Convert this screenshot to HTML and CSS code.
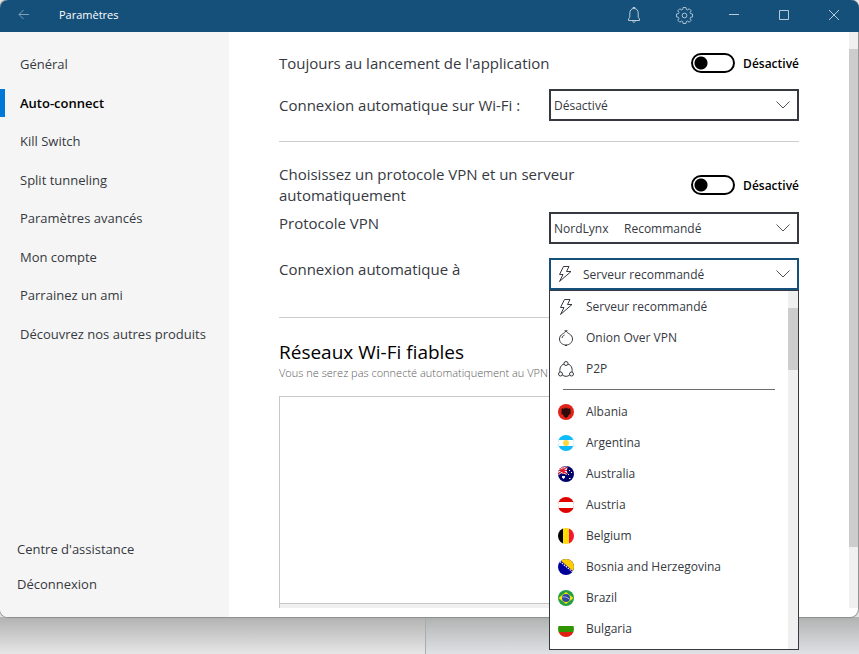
FILE: index.html
```html
<!DOCTYPE html>
<html lang="fr">
<head>
    <meta charset="UTF-8">
    <meta name="viewport" content="width=device-width, initial-scale=1.0">
    <title>Paramètres</title>
    <link rel="stylesheet" href="styles.css">
</head>
<body>
    <div class="window">
        <header class="titlebar">
            <button class="back" aria-label="Retour">
                <svg width="12" height="12" viewBox="0 0 12 12"><path d="M11 5.500H1M5.500 1L1 5.500 5.500 10"/></svg>
            </button>
            <h1>Paramètres</h1>
            <button aria-label="Notifications">
                <svg width="14" height="18" viewBox="0 0 14 18"><path d="M6 2.500V1.500h2v1M1.500 14.500h11v-1.500l-1.300-1.800V7C11.200 4.300 9.500 2.500 7 2.500S2.800 4.300 2.800 7v4.200L1.500 13zM5.500 14.500c0 2.300 3 2.300 3 0"/></svg>
            </button>
            <button aria-label="Réglages">
                <svg width="17" height="17" viewBox="0 0 18 18"><path d="M7.500 1.500h3l.4 2 1.300.6 1.800-1.200 2.100 2.100-1.200 1.800.6 1.300 2 .4v3l-2 .4-.6 1.300 1.200 1.800-2.100 2.100-1.800-1.200-1.300.6-.4 2h-3l-.4-2-1.300-.6L4 17.100 1.900 15l1.200-1.800-.6-1.300-2-.4v-3l2-.4.6-1.300L1.900 5 4 2.900l1.800 1.200 1.300-.6z" transform="translate(0 -1)"/><circle cx="9" cy="9" r="2.500"/></svg>
            </button>
            <button aria-label="Réduire">
                <svg width="10" height="10" viewBox="0 0 10 10"><path d="M0 4.500h10"/></svg>
            </button>
            <button aria-label="Agrandir">
                <svg width="10" height="10" viewBox="0 0 10 10"><path d="M.5.5h9v9h-9z"/></svg>
            </button>
            <button aria-label="Fermer">
                <svg width="10" height="10" viewBox="0 0 10 10"><path d="M0 0l10 10M10 0L0 10"/></svg>
            </button>
        </header>

        <div class="body">
            <aside class="sidebar">
                <nav class="menu">
                    <a href="#general">Général</a>
                    <a href="#auto-connect" class="active">Auto-connect</a>
                    <a href="#kill-switch">Kill Switch</a>
                    <a href="#split-tunneling">Split tunneling</a>
                    <a href="#avances">Paramètres avancés</a>
                    <a href="#compte">Mon compte</a>
                    <a href="#parrainage">Parrainez un ami</a>
                    <a href="#produits">Découvrez nos autres produits</a>
                </nav>
                <div class="links">
                    <a href="#aide">Centre d'assistance</a>
                    <a href="#deconnexion">Déconnexion</a>
                </div>
            </aside>

            <main class="content">
                <div class="row">
                    <label class="name" for="launch">Toujours au lancement de l'application</label>
                    <input type="checkbox" id="launch" class="toggle">
                    <span class="state">Désactivé</span>
                </div>
                <div class="row wifi">
                    <label class="name" for="wifi">Connexion automatique sur Wi-Fi :</label>
                    <select id="wifi" class="box">
                        <option>Désactivé</option>
                        <option>Activé</option>
                    </select>
                </div>
                <hr>
                <div class="row auto">
                    <label class="name" for="auto">Choisissez un protocole VPN et un serveur automatiquement</label>
                    <input type="checkbox" id="auto" class="toggle">
                    <span class="state">Désactivé</span>
                </div>
                <div class="row top protocol">
                    <label class="name" for="protocol">Protocole VPN</label>
                    <select id="protocol" class="box">
                        <option>NordLynx&nbsp;&nbsp;&nbsp;&nbsp;&nbsp;Recommandé</option>
                        <option>OpenVPN (UDP)</option>
                        <option>OpenVPN (TCP)</option>
                    </select>
                </div>
                <div class="row top server">
                    <label class="name" for="server">Connexion automatique à</label>
                    <div class="dropdown">
                        <button id="server" class="box open" aria-haspopup="listbox" aria-expanded="true">
                            <svg class="icon" width="16" height="18" viewBox="0 0 16 18"><path d="M6.500 1.500H12L9.500 6.500H14L2.500 16.500l3.500-7H2.500z"/></svg>
                            Serveur recommandé
                        </button>
                        <div class="list">
                            <ul role="listbox" aria-label="Connexion automatique à">
                                <li role="option" aria-selected="true">
                                    <svg class="icon" width="16" height="18" viewBox="0 0 16 18"><path d="M6.500 1.500H12L9.500 6.500H14L2.500 16.500l3.500-7H2.500z"/></svg>
                                    Serveur recommandé
                                </li>
                                <li role="option">
                                    <svg class="icon" width="16" height="16" viewBox="0 0 16 16"><path d="M6.500.8h3M8 1C7 3.500 1.500 4 1.500 9c0 3.500 3 6 6.500 6s6.500-2.500 6.500-6C14.500 4 9 3.500 8 1zM7 15.500h2M4 8c.3-1.500 1.200-2.400 2.500-3"/></svg>
                                    Onion Over VPN
                                </li>
                                <li role="option">
                                    <svg class="icon" width="16" height="16" viewBox="0 0 16 16"><circle cx="8" cy="2.500" r="2"/><circle cx="2.500" cy="13" r="2"/><circle cx="13.500" cy="13" r="2"/><path d="M6 3C3 4 1.300 7 2 11M10 3c3 1 4.700 4 4 8M4.300 14c2.200 1.800 5.200 1.800 7.400 0"/></svg>
                                    P2P
                                </li>
                                <li class="line" role="separator"></li>
                                <li role="option">
                                    <svg class="flag" viewBox="0 0 16 16"><path fill="#e2231a" d="M0 0h16v16H0z"/><path fill="#2a0d0b" d="M4 4l2 1 1-1.500 1 1 1-1L10 5l2-1v1l1 1-1 1 1 1-1 1 1 1-2 .5-1 2-2 1.500-2-1.500-1-2L3 10l1-1-1-1 1-1-1-1 1-1z"/></svg>
                                    Albania
                                </li>
                                <li role="option">
                                    <svg class="flag" viewBox="0 0 16 16"><path fill="#0fbcf9" d="M0 0h16v16H0z"/><path fill="#fff" d="M0 5h16v6H0z"/><circle cx="8" cy="8" r="3" fill="#ffd93b"/></svg>
                                    Argentina
                                </li>
                                <li role="option">
                                    <svg class="flag" viewBox="0 0 16 16"><path fill="#00006b" d="M0 0h16v16H0z"/><path stroke="#fff" stroke-width="2.500" d="M0 1l9 7M0 8l9-7M5 0v8M0 4.500h9"/><path stroke="#e0162b" stroke-width="1.200" d="M0 1l9 7M0 8l9-7M5 0v8M0 4.500h9"/><path fill="#fff" d="M4 10h3v1.500L5.500 13 4 11.500zM11 4h1v1h-1zM13 6h1v1h-1zM10 8h1v1h-1zM11 12h1.500v1H11z"/></svg>
                                    Australia
                                </li>
                                <li role="option">
                                    <svg class="flag" viewBox="0 0 16 16"><path fill="#e00000" d="M0 0h16v16H0z"/><path fill="#fff" d="M0 5h16v6H0z"/></svg>
                                    Austria
                                </li>
                                <li role="option">
                                    <svg class="flag" viewBox="0 0 16 16"><path fill="#000" d="M0 0h5v16H0z"/><path fill="#ffd90c" d="M5 0h6v16H5z"/><path fill="#f31830" d="M11 0h5v16h-5z"/></svg>
                                    Belgium
                                </li>
                                <li role="option">
                                    <svg class="flag" viewBox="0 0 16 16"><path fill="#000099" d="M0 0h16v16H0z"/><path fill="#fc0" d="M1 0h15v13z"/><path stroke="#fff" stroke-width="1.200" stroke-dasharray="1.500 1" d="M0 1l16 13"/></svg>
                                    Bosnia and Herzegovina
                                </li>
                                <li role="option">
                                    <svg class="flag" viewBox="0 0 16 16"><path fill="#229e45" d="M0 0h16v16H0z"/><path fill="#f8e509" d="M8 2l7.500 6L8 14 .5 8z"/><circle cx="8" cy="8" r="4" fill="#2b49a3"/><path fill="none" stroke="#a9b8e0" d="M4.500 7c2.500-.5 5 .3 7 2.200"/></svg>
                                    Brazil
                                </li>
                                <li role="option">
                                    <svg class="flag" viewBox="0 0 16 16"><path fill="#fff" d="M0 0h16v5H0z"/><path fill="#319400" d="M0 5h16v6H0z"/><path fill="#de2110" d="M0 11h16v5H0z"/></svg>
                                    Bulgaria
                                </li>
                            </ul>
                            <div class="scroll"><div class="thumb"></div></div>
                        </div>
                    </div>
                </div>
                <hr class="second">
                <h2>Réseaux Wi-Fi fiables</h2>
                <p class="hint">Vous ne serez pas connecté automatiquement au VPN</p>
                <div class="networks"></div>
            </main>
            <div class="scroll page"><div class="thumb"></div></div>
        </div>
    </div>
    <div class="backdrop">
        <div class="left"></div>
        <div class="right"></div>
    </div>
</body>
</html>
```
FILE: styles.css
```css
* {
    box-sizing: border-box;
}
body {
    display: flex;
    flex-direction: column;
    min-height: 100vh;
    margin: 0;
    font-family: "Segoe UI", "Open Sans", sans-serif;
    font-size: 13px;
    color: #36393f;
    background: #e4e5e6;
}
button, select {
    margin: 0;
    font: inherit;
    color: inherit;
}
a {
    color: inherit;
    text-decoration: none;
}
svg {
    display: block;
    flex: none;
}
.window {
    position: relative;
    z-index: 1;
    display: flex;
    flex-direction: column;
    flex: 1;
    margin-right: 1px;
    border-radius: 8px;
    background: white;
    box-shadow: 0 0 1px 1px #8c8c8c;
}

/* title bar */
.titlebar {
    display: flex;
    height: 32px;
    margin-right: -1px;
    border-radius: 8px 8px 0 0;
    background: #15507a;
    color: white;
}
.titlebar h1 {
    flex: 1;
    margin: 0;
    padding-left: 11px;
    font-size: 11px;
    font-weight: normal;
    line-height: 30px;
}
.titlebar button {
    display: flex;
    align-items: center;
    justify-content: center;
    width: 50px;
    height: 30px;
    padding: 0;
    border: none;
    background: none;
}
.titlebar .back {
    width: 48px;
}
.titlebar svg {
    fill: none;
    stroke: #b9cbd8;
}
.titlebar .back svg {
    stroke: #7f9fb6;
}

/* sidebar */
.body {
    display: flex;
    flex: 1;
}
.sidebar {
    display: flex;
    flex-direction: column;
    justify-content: space-between;
    width: 229px;
    padding: 13px 0 15px;
    border-radius: 0 0 0 8px;
    background: #f5f5f5;
}
.menu {
    display: grid;
    grid-auto-rows: 1fr;
    height: 308px;
}
.menu a {
    display: flex;
    align-items: center;
    padding-left: 20px;
}
.menu .active {
    position: relative;
    font-weight: 600;
    color: black;
}
.menu .active::before {
    content: "";
    position: absolute;
    left: 0;
    width: 5px;
    height: 28px;
    background: #0078d7;
}
.links a {
    display: block;
    padding-left: 17px;
    line-height: 35px;
}

/* settings */
.content {
    display: flex;
    flex-direction: column;
    flex: 1;
    padding: 15px 50px 9px;
}
.row {
    display: flex;
    align-items: center;
    min-height: 32px;
}
.row.top {
    align-items: flex-start;
}
.name {
    flex: 1;
    padding-right: 60px;
    font-size: 15px;
    line-height: 21px;
}
.wifi {
    margin-top: 10px;
}
.wifi .name, .top .name {
    padding: 1px 0 0;
}
.auto {
    margin-top: 22px;
}
.protocol {
    margin-top: 6px;
}
.server {
    margin-top: 14px;
}
hr {
    width: 100%;
    height: 1px;
    margin: 20px 0 0;
    border: none;
    background: #cccccc;
}
hr.second {
    margin-top: 27px;
}
.toggle {
    appearance: none;
    width: 44px;
    height: 20px;
    margin: 0;
    border: 2px solid black;
    border-radius: 10px;
    background: radial-gradient(circle at 8px 8px, black 6px, transparent 7px);
}
.state {
    padding-left: 8px;
    font-size: 12px;
    font-weight: 600;
    color: black;
}
.box {
    appearance: none;
    width: 250px;
    height: 32px;
    padding: 0 3px;
    border: 2px solid #36393f;
    border-radius: 0;
    font-size: 12px;
    background: white url("data:image/svg+xml,%3Csvg xmlns='http://www.w3.org/2000/svg' width='14' height='8' fill='none' stroke='%2350535a'%3E%3Cpath d='M.5.5L7 7 13.500.5'/%3E%3C/svg%3E") no-repeat right 7px center;
}
.box.open {
    display: flex;
    align-items: center;
    gap: 10px;
    padding-left: 6px;
    border-color: #15507a;
}

/* server list */
.dropdown {
    position: relative;
}
.list {
    position: absolute;
    top: 32px;
    left: 0;
    z-index: 2;
    display: flex;
    width: 100%;
    border: 1px solid #36393f;
    background: white;
}
.list ul {
    flex: 1;
    margin: 0;
    padding: 0 0 5px;
    list-style: none;
    font-size: 12px;
}
.list li {
    display: flex;
    align-items: center;
    gap: 12px;
    height: 31px;
    padding-left: 8px;
}
.list .line {
    height: 1px;
    margin: 5px 13px 6px;
    background: #6e6e6e;
}
.icon {
    fill: none;
    stroke: #36393f;
}
.flag {
    width: 16px;
    height: 16px;
    border-radius: 50%;
}
.scroll {
    width: 10px;
    padding-top: 17px;
    background: #f0f0f0;
}
.thumb {
    height: 62px;
    background: #cdcdcd;
}
.page {
    width: 9px;
    margin-bottom: 9px;
}
.page .thumb {
    height: 89%;
}

/* trusted networks */
h2 {
    margin: 20px 0 0;
    font-size: 19px;
    font-weight: normal;
    line-height: 28px;
    color: black;
}
.hint {
    margin: 0;
    font-size: 11px;
    font-weight: 300;
    line-height: 14px;
    color: #5c5c5c;
}
.networks {
    display: flex;
    flex: 1;
    align-items: flex-end;
    margin-top: 16px;
    border: 1px solid #c8c8c8;
    border-bottom: none;
}
.networks::after {
    content: "";
    flex: 1;
    height: 4px;
    border-top: 1px solid #c8c8c8;
    background: #f0f0f0;
}

/* windows behind */
.backdrop {
    display: flex;
    height: 37px;
}
.left {
    width: 426px;
    border-right: 1px solid #a9abad;
    background: linear-gradient(#b2b2b2, #e6e6e6);
}
.right {
    flex: 1;
    background: linear-gradient(#b0b2b2, #dfe1e4);
}
```
